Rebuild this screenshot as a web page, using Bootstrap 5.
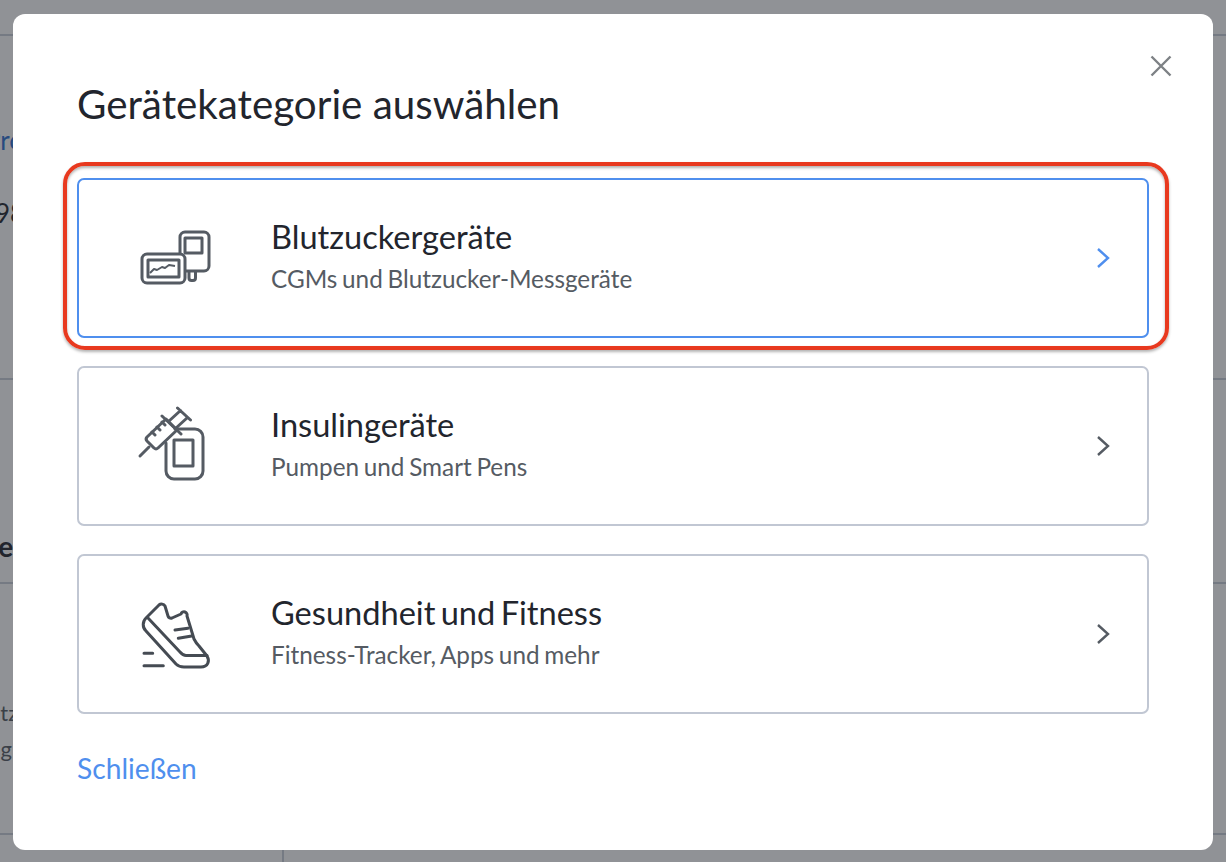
<!DOCTYPE html>
<html lang="de">
<head>
<meta charset="utf-8">
<title>Gerätekategorie auswählen</title>
<link href="https://cdn.jsdelivr.net/npm/bootstrap@5.3.0/dist/css/bootstrap.min.css" rel="stylesheet">
<style>
html,body{height:862px;overflow:hidden;}
body{font-family:Lato,"Liberation Sans",sans-serif;background:#fff;color:#22252d;}
.bg-page{height:862px;position:relative;overflow:hidden;}
.bg-sec{border-bottom:2px solid #c9ced8;box-sizing:border-box;overflow:hidden;white-space:nowrap;font-size:24px;}
.s1{height:36px}
.s2{height:344px;padding-top:86px;}
.s3{height:204px;padding-top:149px;}
.s4{height:251px;padding-top:111px;color:#555b63;line-height:36px;font-size:22px;}
.bg-link{color:#2c6fd1;margin-left:-15px;display:block;line-height:36px;font-size:26px;}
.bg-num{margin-left:-5px;display:block;margin-top:37px;line-height:36px;font-size:26px;}
.bg-head{margin-left:-22px;display:block;font-weight:700;font-size:28px;line-height:34px;}
.bg-t1{margin-left:-5px;display:block;}
.bg-t2{margin-left:-24px;display:block;}
.bg-v{position:absolute;left:282px;top:840px;bottom:0;border-left:2px solid #c9ced8;}
.scrim{position:absolute;inset:0;background:rgba(34,37,45,.5);}
.dlg.modal-content{position:absolute;left:13px;top:14px;width:1200px;height:836px;border:0;border-radius:12px;padding:0 64px;display:block;background:#fff;}
.dlg-x{position:absolute;left:1137px;top:41px;width:22px;height:22px;padding:0;border:0;background:none;line-height:0;}
.dlg-title{font-size:40.35px;font-weight:400;line-height:44px;margin:68px 0 0;color:#22252d;}
.opts{display:flex;flex-direction:column;gap:28px;margin-top:52px;}
.opt{height:160px;border:2px solid #c1c7d3;border-radius:7px;background:#fff;display:flex;align-items:center;position:relative;text-decoration:none;}
.opt.on{border-color:#4f8fee;}
.opt-ic{width:192px;flex:none;padding-left:56px;line-height:0;}
.opt-body{flex:1;padding-bottom:6px;}
.opt-t{font-size:32.6px;line-height:40px;color:#22252d;word-spacing:-3px;}
.opt-s{font-size:24.3px;line-height:30px;color:#555b63;margin-top:7px;word-spacing:-1.5px;}
.opt-ch{width:16px;flex:none;margin-right:36px;line-height:0;}
.ring{position:absolute;left:-16px;top:-18px;right:-22px;bottom:-14px;border:4px solid #e8391f;border-radius:22px;box-shadow:0 2px 3px rgba(0,0,0,.3),inset 0 2px 3px rgba(0,0,0,.3);pointer-events:none;}
.close-lnk{display:inline-block;margin-top:36px;font-size:28.2px;line-height:36px;color:#4f8fee;text-decoration:none;}
</style>
</head>
<body>
<div class="bg-page">
  <div class="bg-sec s1"></div>
  <div class="bg-sec s2"><span class="bg-link">Pro</span><span class="bg-num">98</span></div>
  <div class="bg-sec s3"><span class="bg-head">Ge</span></div>
  <div class="bg-sec s4"><span class="bg-t1">itz</span><span class="bg-t2">ung</span></div>
  <div class="bg-v"></div>
  <div class="scrim"></div>
  <div class="modal-content dlg" role="dialog" aria-modal="true">
    <button type="button" class="dlg-x" aria-label="Schließen">
      <svg width="22" height="22" viewBox="0 0 22 22" fill="none" stroke="#7d8185" stroke-width="2.4"><path d="M1.5 1.5l19 19M20.5 1.5l-19 19"/></svg>
    </button>
    <h1 class="dlg-title">Gerätekategorie auswählen</h1>
    <div class="opts">
      <a class="opt on" href="#">
        <span class="ring"></span>
        <span class="opt-ic">
          <svg width="80" height="66" viewBox="0 0 80 66" fill="none" stroke="#555b63" stroke-width="3" stroke-linejoin="round">
            <path d="M45 28V12a5 5 0 0 1 5-5h19a5 5 0 0 1 5 5v29a5 5 0 0 1-5 5H50"/>
            <rect x="50" y="13" width="17" height="15"/>
            <path d="M54 46v7a2.500 2.500 0 0 0 2.500 2.500h1.500a2.500 2.500 0 0 0 2.500-2.500v-7"/>
            <rect x="7" y="29" width="43" height="29" rx="5" fill="#fff"/>
            <rect x="13" y="35" width="31" height="17"/>
            <path d="M15 48l4-4 3 1 5-3 3 1 4-3 6 1" stroke-width="2"/>
          </svg>
        </span>
        <span class="opt-body d-block">
          <span class="opt-t d-block">Blutzuckergeräte</span>
          <span class="opt-s d-block">CGMs und Blutzucker-Messgeräte</span>
        </span>
        <span class="opt-ch"><svg width="16" height="22" viewBox="0 0 16 22" fill="none" stroke="#4f8fee" stroke-width="2.4"><path d="M3 2l10 9-10 9"/></svg></span>
      </a>
      <a class="opt" href="#">
        <span class="opt-ic">
          <svg width="80" height="80" viewBox="0 0 80 80" fill="none" stroke="#555b63" stroke-width="3" stroke-linejoin="round" stroke-linecap="round">
            <path d="M5 50l9-9"/>
            <path d="M12 31L31 13l11 11-19 18a3 3 0 0 1-4 0l-7-7a3 3 0 0 1 0-4z"/>
            <path d="M27 10l19 18M33.500 15.500L45.500 4.500M40.500 22.500L52.500 11.500M42.500 2L55.500 14M17 26l3 3M22 21l3 3M27 16l3 3"/>
            <path d="M40 23h20a8 8 0 0 1 8 8v34a8 8 0 0 1-8 8H39a8 8 0 0 1-8-8V37"/>
            <rect x="39" y="34" width="19" height="26"/>
          </svg>
        </span>
        <span class="opt-body d-block">
          <span class="opt-t d-block">Insulingeräte</span>
          <span class="opt-s d-block">Pumpen und Smart Pens</span>
        </span>
        <span class="opt-ch"><svg width="16" height="22" viewBox="0 0 16 22" fill="none" stroke="#555b63" stroke-width="2.4"><path d="M3 2l10 9-10 9"/></svg></span>
      </a>
      <a class="opt" href="#">
        <span class="opt-ic">
          <svg width="80" height="72" viewBox="0 0 80 72" fill="none" stroke="#454b53" stroke-width="3" stroke-linejoin="round" stroke-linecap="round">
            <path d="M11 20L24 7a4 4 0 0 1 6 1l3 10a3 3 0 0 0 4 2l9-4a3 3 0 0 1 6 2l7 23q2 4 5 7l8 10c3 5 1 11-6 11H49q-5 0-8-3L11 33a9 9 0 0 1 0-13z"/>
            <path d="M13 20L45 54q3 3.500 6 3.500H72"/>
            <path d="M40 32l13-1.700M43.300 40.300L56.700 38M9 55.300h8.700M9 67.700h19.300"/>
          </svg>
        </span>
        <span class="opt-body d-block">
          <span class="opt-t d-block">Gesundheit und Fitness</span>
          <span class="opt-s d-block">Fitness-Tracker, Apps und mehr</span>
        </span>
        <span class="opt-ch"><svg width="16" height="22" viewBox="0 0 16 22" fill="none" stroke="#555b63" stroke-width="2.4"><path d="M3 2l10 9-10 9"/></svg></span>
      </a>
    </div>
    <a class="close-lnk" href="#">Schließen</a>
  </div>
</div>
<script src="https://cdn.jsdelivr.net/npm/bootstrap@5.3.0/dist/js/bootstrap.bundle.min.js"></script>
</body>
</html>
